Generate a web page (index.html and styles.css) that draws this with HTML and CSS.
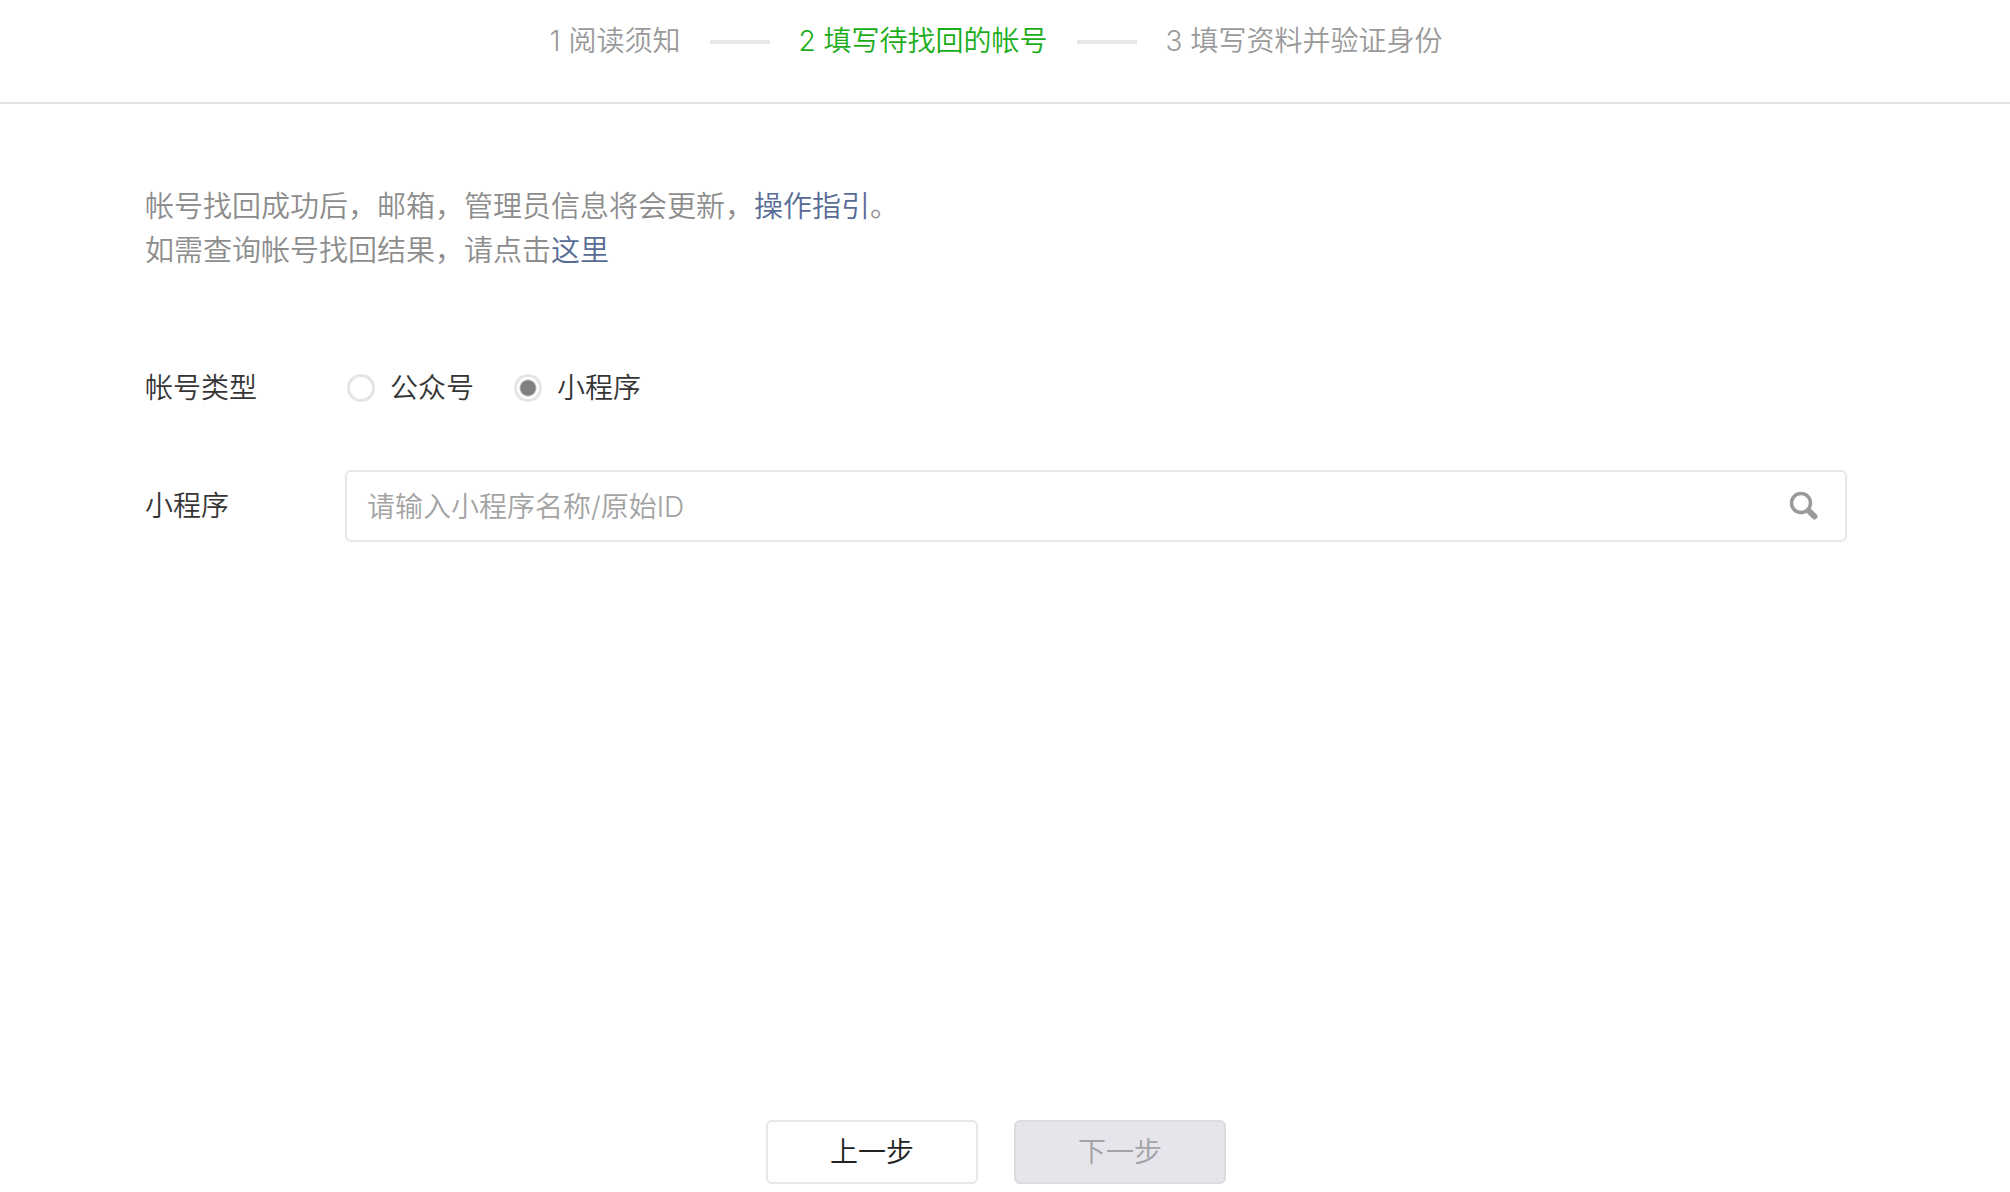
FILE: index.html
```html
<!DOCTYPE html>
<html lang="zh-CN">
<head>
  <meta charset="utf-8">
  <title>找回帐号</title>
  <meta name="viewport" content="width=device-width, initial-scale=1">
  <link rel="stylesheet" href="styles.css">
</head>
<body>
  <header class="header">
    <ol class="steps">
      <li class="step">1 阅读须知</li>
      <li class="step current" aria-current="step">2 填写待找回的帐号</li>
      <li class="step">3 填写资料并验证身份</li>
    </ol>
  </header>

  <form class="main">
    <p class="notice">
      帐号找回成功后，邮箱，管理员信息将会更新，<a href="#">操作指引</a>。<br>
      如需查询帐号找回结果，请点击<a href="#">这里</a>
    </p>

    <div class="row" role="radiogroup" aria-labelledby="type-label">
      <span class="label" id="type-label">帐号类型</span>
      <div class="radios">
        <label class="radio"><input type="radio" name="type" value="mp">公众号</label>
        <label class="radio"><input type="radio" name="type" value="app" checked>小程序</label>
      </div>
    </div>

    <div class="row">
      <label class="label" for="keyword">小程序</label>
      <div class="search">
        <input type="text" id="keyword" placeholder="请输入小程序名称/原始ID">
        <button type="button" class="search-btn" aria-label="搜索">
          <svg width="30" height="30" viewBox="0 0 30 30" fill="none" stroke="#9a9a9a">
            <circle cx="12" cy="12" r="9.5" stroke-width="3.5"/>
            <path d="M19 19l1.5 1.5" stroke-width="4"/>
            <path d="M21 21l4.5 4.5" stroke-width="6" stroke-linecap="round"/>
          </svg>
        </button>
      </div>
    </div>

    <div class="actions">
      <button type="button" class="btn">上一步</button>
      <button type="submit" class="btn" disabled>下一步</button>
    </div>
  </form>
</body>
</html>
```

FILE: styles.css
```css
* {
  box-sizing: border-box;
}
body {
  display: flex;
  flex-direction: column;
  min-height: 100vh;
  margin: 0;
  font-family: Inter, "Noto Sans CJK SC", sans-serif;
  font-size: 28px;
  font-weight: 350;
  line-height: 44px;
  color: #353535;
  background: #fff;
}
input, button {
  font: inherit;
  color: inherit;
}
a {
  color: #576b95;
  text-decoration: none;
}

/* steps */
.header {
  padding: 19px 163px 39px 145px;
  border-bottom: 2px solid #e1e4e8;
}
.steps {
  display: flex;
  justify-content: center;
  margin: 0;
  padding: 0;
  list-style: none;
}
.step {
  display: flex;
  align-items: center;
  color: #9a9a9a;
}
.step + .step::before {
  content: "";
  width: 60px;
  height: 4px;
  margin: 2px 29px 0;
  background: #e4e8eb;
}
.current {
  color: #1aad19;
}

/* form */
.main {
  display: flex;
  flex: 1;
  flex-direction: column;
  padding: 81px 163px 8px 145px;
}
.notice {
  margin: 0 0 93px;
  font-size: 29px;
  color: #8d8d8d;
}
.row {
  display: flex;
  align-items: center;
  margin-bottom: 60px;
}
.label {
  flex: none;
  width: 200px;
}
.radios {
  display: flex;
  gap: 40px;
  padding-left: 2px;
}
.radio {
  display: flex;
  align-items: center;
  gap: 15px;
}
.radio input {
  appearance: none;
  width: 28px;
  height: 28px;
  margin: 0;
  border: 3px solid #e4e5e9;
  border-radius: 50%;
}
.radio input:checked {
  background: radial-gradient(circle, #808080 7px, transparent 9px);
}
.search {
  display: flex;
  flex: 1;
  align-items: center;
  height: 72px;
  border: 2px solid #e4e8eb;
  border-radius: 6px;
}
.search input {
  flex: 1;
  min-width: 0;
  padding: 2px 20px 0;
  border: 0;
  outline: 0;
  background: none;
}
.search input::placeholder {
  color: #a3a3a3;
}
.search-btn {
  display: flex;
  padding: 0 26px;
  border: 0;
  background: none;
}

/* buttons */
.actions {
  display: flex;
  justify-content: center;
  gap: 36px;
  margin-top: auto;
}
.btn {
  width: 212px;
  height: 64px;
  padding: 0;
  border: 2px solid #e6e6eb;
  border-radius: 6px;
  color: #222;
  background: #fff;
}
.btn:disabled {
  border-color: #dadae0;
  color: #a3a3a6;
  background: #e6e5eb;
}
```
